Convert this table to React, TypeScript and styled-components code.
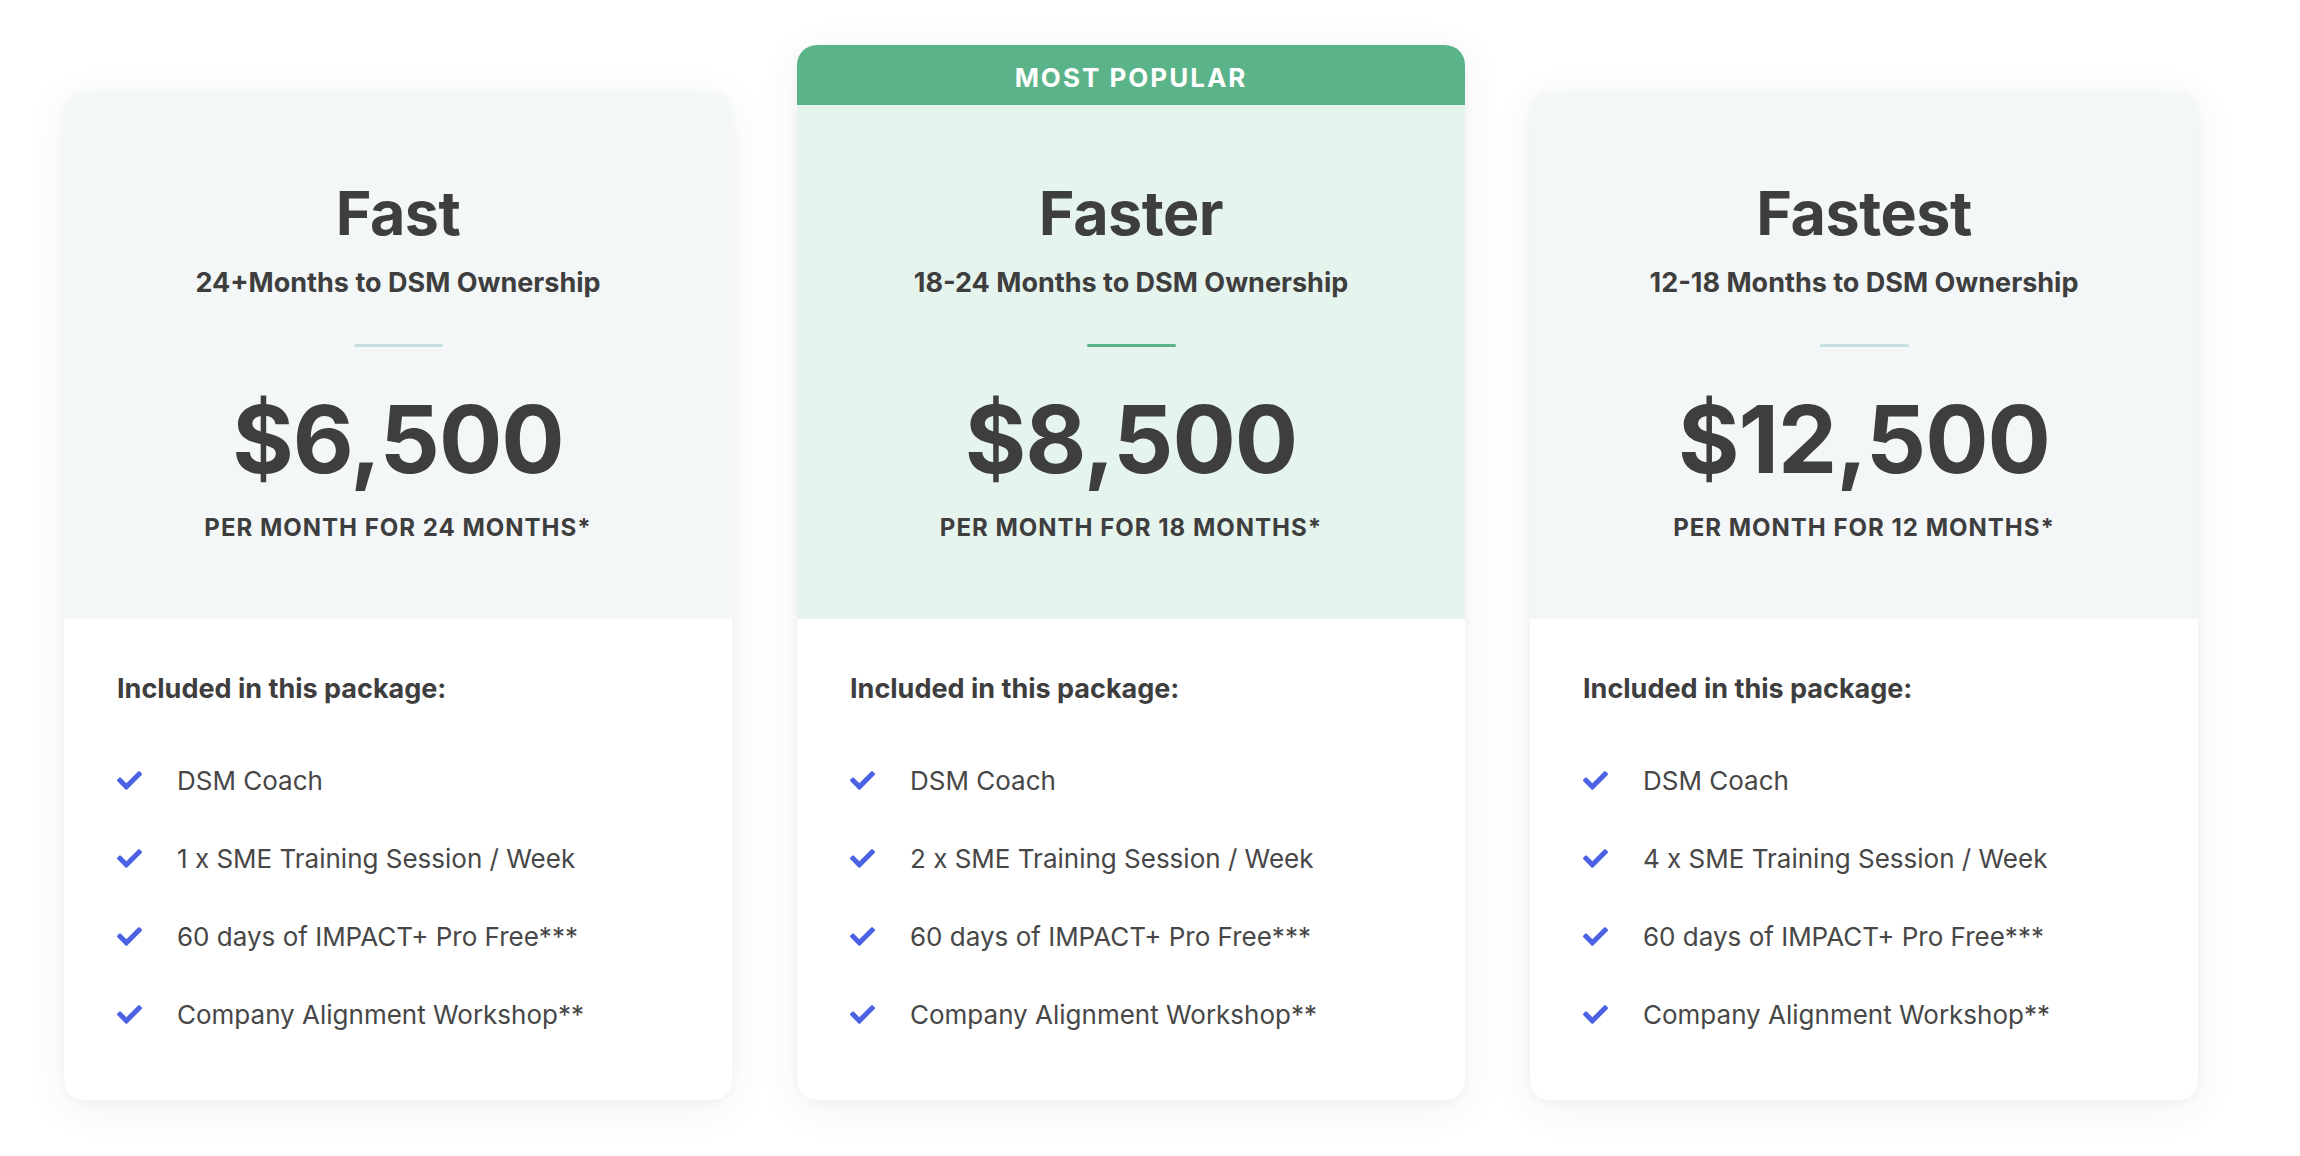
import React from "react";
import styled, { createGlobalStyle } from "styled-components";
import { FaCheck } from "react-icons/fa";

const GlobalStyle = createGlobalStyle`
  html, body { margin: 0; padding: 0; background: #ffffff; }
  body { font-family: Inter, Lato, sans-serif; color: #3e3e3e; }
  * { box-sizing: border-box; }
`;

const Page = styled.div`
  width: 2300px;
  height: 1156px;
  padding: 45px 0 0 64px;
  display: flex;
  align-items: flex-start;
  gap: 65px;
  background: #ffffff;
`;

const Card = styled.div<{ $popular?: boolean }>`
  width: 668px;
  margin-top: ${(p) => (p.$popular ? "0" : "47px")};
  border-radius: 20px;
  background: #ffffff;
  box-shadow: 0 8px 40px rgba(40, 60, 90, 0.07), 0 2px 10px rgba(40, 60, 90, 0.03);
  overflow: hidden;
  display: flex;
  flex-direction: column;
`;

const Badge = styled.div`
  height: 60px;
  padding-top: 4px;
  background: #5bb38a;
  color: #ffffff;
  font-weight: 700;
  font-size: 26px;
  letter-spacing: 2px;
  display: flex;
  align-items: center;
  justify-content: center;
`;

const Header = styled.div<{ $popular?: boolean }>`
  background: ${(p) => (p.$popular ? "#e6f4ee" : "#f3f7f8")};
  padding: ${(p) => (p.$popular ? "72px" : "85px")} 20px 75px;
  display: flex;
  flex-direction: column;
  align-items: center;
  text-align: center;
`;

const Title = styled.h2`
  margin: 0;
  font-size: 61px;
  line-height: 72px;
  font-weight: 700;
  letter-spacing: -0.5px;
  color: #3e3e3e;
`;

const Subtitle = styled.div`
  margin-top: 16px;
  font-size: 27px;
  line-height: 35px;
  font-weight: 700;
  color: #3e3e3e;
`;

const Divider = styled.div<{ $popular?: boolean }>`
  margin-top: 44px;
  width: 89px;
  height: 3px;
  border-radius: 2px;
  background: ${(p) => (p.$popular ? "#5bb38a" : "#c6dedf")};
`;

const Price = styled.div`
  margin-top: 38px;
  font-size: 94px;
  line-height: 108px;
  font-weight: 700;
  letter-spacing: -1px;
  color: #3e3e3e;
`;

const Period = styled.div`
  margin-top: 19px;
  font-size: 24px;
  line-height: 32px;
  font-weight: 700;
  letter-spacing: 1px;
  color: #3e3e3e;
`;

const Body = styled.div`
  padding: 54px 53px 47px;
  display: flex;
  flex-direction: column;
`;

const BodyTitle = styled.div`
  font-size: 27px;
  line-height: 32px;
  font-weight: 700;
  color: #3e3e3e;
`;

const FeatureList = styled.ul`
  list-style: none;
  margin: 36px 0 0;
  padding: 0;
`;

const Feature = styled.li`
  height: 78px;
  display: flex;
  align-items: center;
  gap: 35px;
  font-size: 26px;
  font-weight: 400;
  color: #474747;
`;

const Check = styled(FaCheck)`
  flex: none;
  width: 25px;
  height: 25px;
  color: #4c62e4;
`;

type Plan = {
  name: string;
  subtitle: string;
  price: string;
  period: string;
  sessions: number;
  popular?: boolean;
};

const plans: Plan[] = [
  { name: "Fast", subtitle: "24+Months to DSM Ownership", price: "$6,500", period: "PER MONTH FOR 24 MONTHS*", sessions: 1 },
  { name: "Faster", subtitle: "18-24 Months to DSM Ownership", price: "$8,500", period: "PER MONTH FOR 18 MONTHS*", sessions: 2, popular: true },
  { name: "Fastest", subtitle: "12-18 Months to DSM Ownership", price: "$12,500", period: "PER MONTH FOR 12 MONTHS*", sessions: 4 },
];

export default function App() {
  return (
    <>
      <GlobalStyle />
      <Page>
        {plans.map((p) => (
          <Card key={p.name} $popular={p.popular}>
            {p.popular && <Badge>MOST POPULAR</Badge>}
            <Header $popular={p.popular}>
              <Title>{p.name}</Title>
              <Subtitle>{p.subtitle}</Subtitle>
              <Divider $popular={p.popular} />
              <Price>{p.price}</Price>
              <Period>{p.period}</Period>
            </Header>
            <Body>
              <BodyTitle>Included in this package:</BodyTitle>
              <FeatureList>
                {[
                  "DSM Coach",
                  `${p.sessions} x SME Training Session / Week`,
                  "60 days of IMPACT+ Pro Free***",
                  "Company Alignment Workshop**",
                ].map((f) => (
                  <Feature key={f}>
                    <Check />
                    <span>{f}</span>
                  </Feature>
                ))}
              </FeatureList>
            </Body>
          </Card>
        ))}
      </Page>
    </>
  );
}
